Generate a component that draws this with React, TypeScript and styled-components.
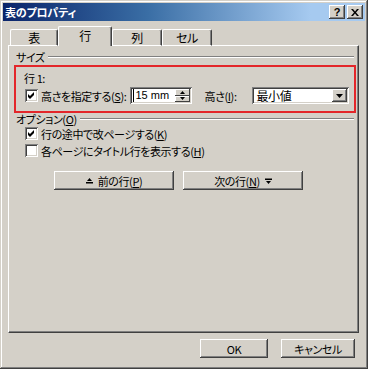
import React from 'react';
import styled, { createGlobalStyle } from 'styled-components';

const GlobalStyle = createGlobalStyle`
    html, body {
        margin: 0;
        padding: 0;
        background: #d4d0c8;
    }
    body {
        font-family: 'Noto Sans CJK JP', 'Noto Sans', sans-serif;
        font-size: 11px;
        letter-spacing: -0.4px;
        font-feature-settings: 'palt';
        color: #000;
    }
`;

const raised = `
    box-shadow: inset -1px -1px #404040, inset 1px 1px #ffffff, inset -2px -2px #808080, inset 2px 2px #d4d0c8;
`;

const sunken = `
    box-shadow: inset 1px 1px #808080, inset -1px -1px #ffffff, inset 2px 2px #404040, inset -2px -2px #d4d0c8;
`;

const Window = styled.div`
    width: 368px;
    height: 369px;
    box-sizing: border-box;
    padding: 3px;
    background: #d4d0c8;
    box-shadow: inset -1px -1px #404040, inset 1px 1px #d4d0c8, inset -2px -2px #808080, inset 2px 2px #ffffff;
    display: flex;
    flex-direction: column;
`;

const TitleBar = styled.div`
    height: 18px;
    display: flex;
    align-items: center;
    justify-content: space-between;
    padding: 0 2px 0 2px;
    background: linear-gradient(90deg, #0a246a 0%, #3a6ea5 40%, #a6caf0 85%);
`;

const Title = styled.span`
    color: #fff;
    font-weight: bold;
    font-size: 11px;
    line-height: 18px;
    letter-spacing: -0.2px;
`;

const CaptionButtons = styled.div`
    display: flex;
    gap: 2px;
`;

const CaptionButton = styled.div`
    width: 16px;
    height: 14px;
    background: #d4d0c8;
    ${raised}
    display: flex;
    align-items: center;
    justify-content: center;
    font-family: 'Liberation Sans', sans-serif;
    font-weight: bold;
    font-size: 11px;
    line-height: 14px;
    letter-spacing: 0;
`;

const Body = styled.div`
    flex: 1;
    display: flex;
    flex-direction: column;
    padding: 6px 6px 0 5px;
`;

const TabStrip = styled.div`
    display: flex;
    align-items: flex-end;
    height: 19px;
    padding-left: 2px;
    position: relative;
    z-index: 1;
    margin-bottom: -1px;
`;

const Tab = styled.div<{ $active?: boolean; $w: number }>`
    width: ${({ $w }) => $w}px;
    height: ${({ $active }) => ($active ? 20 : 17)}px;
    box-sizing: border-box;
    background: #d4d0c8;
    border-top: 1px solid #fff;
    border-left: 1px solid #fff;
    border-right: 1px solid #404040;
    border-radius: 2px 2px 0 0;
    box-shadow: inset -1px 0 #808080;
    display: flex;
    align-items: center;
    justify-content: center;
    padding-bottom: ${({ $active }) => ($active ? 2 : 0)}px;
    font-size: 12px;
    border-bottom: ${({ $active }) => ($active ? 'none' : '1px solid #fff')};
`;

const Panel = styled.div`
    height: 288px;
    box-sizing: border-box;
    border-top: 1px solid #fff;
    border-left: 1px solid #fff;
    border-right: 1px solid #404040;
    border-bottom: 1px solid #404040;
    box-shadow: inset -1px -1px #808080;
    display: flex;
    flex-direction: column;
`;

const GroupHeader = styled.div<{ $top: number }>`
    display: flex;
    align-items: center;
    height: 12px;
    margin-top: ${({ $top }) => $top}px;
    padding-left: 7px;
    padding-right: 4px;
    gap: 3px;
    line-height: 12px;

    &::after {
        content: '';
        flex: 1;
        height: 0;
        border-top: 1px solid #808080;
        border-bottom: 1px solid #fff;
    }
`;

const Highlight = styled.div`
    margin: 2px 2px 0 5px;
    height: 48px;
    box-sizing: border-box;
    border: 2px solid #e3262a;
    padding: 4px 0 0 8px;
    display: flex;
    flex-direction: column;
`;

const RowTitle = styled.div`
    height: 14px;
    line-height: 14px;
`;

const FieldRow = styled.div`
    display: flex;
    align-items: center;
    height: 17px;
    margin-top: 2px;
`;

const Box = styled.div`
    width: 13px;
    height: 13px;
    box-sizing: border-box;
    background: #fff;
    ${sunken}
    display: flex;
    align-items: center;
    justify-content: center;
    flex: none;
`;

const Label = styled.span<{ $w?: number; $ml?: number }>`
    margin-left: ${({ $ml }) => $ml ?? 3}px;
    width: ${({ $w }) => ($w ? `${$w}px` : 'auto')};
    white-space: nowrap;
    line-height: 14px;
`;

const SpinBox = styled.div`
    margin-left: 4px;
    width: 62px;
    height: 17px;
    box-sizing: border-box;
    background: #fff;
    ${sunken}
    display: flex;
    align-items: center;
    padding: 2px 2px 2px 3px;
`;

const SpinText = styled.span`
    flex: 1;
    font-family: 'Liberation Sans', sans-serif;
    font-size: 11px;
    letter-spacing: 0;
    line-height: 13px;
    border-left: 1px solid #000;
    padding-left: 1px;
`;

const SpinButtons = styled.div`
    display: flex;
    flex-direction: column;
    width: 15px;
    height: 13px;
`;

const SpinButton = styled.div`
    flex: 1;
    background: #d4d0c8;
    box-shadow: inset -1px -1px #404040, inset 1px 1px #ffffff;
    display: flex;
    align-items: center;
    justify-content: center;
`;

const Select = styled.div`
    width: 97px;
    height: 17px;
    box-sizing: border-box;
    background: #fff;
    ${sunken}
    display: flex;
    align-items: center;
    padding: 2px;
`;

const SelectText = styled.span`
    flex: 1;
    padding-left: 2px;
    font-size: 12px;
    line-height: 13px;
`;

const DropButton = styled.div`
    width: 15px;
    height: 13px;
    background: #d4d0c8;
    ${raised}
    display: flex;
    align-items: center;
    justify-content: center;
`;

const CheckRow = styled.div<{ $top: number }>`
    display: flex;
    align-items: center;
    height: 13px;
    margin-top: ${({ $top }) => $top}px;
    padding-left: 16px;
`;

const NavRow = styled.div`
    display: flex;
    gap: 9px;
    margin-top: 14px;
    padding-left: 45px;
`;

const Button = styled.div<{ $w: number }>`
    width: ${({ $w }) => $w}px;
    height: 19px;
    box-sizing: border-box;
    background: #d4d0c8;
    ${raised}
    display: flex;
    align-items: center;
    justify-content: center;
    gap: 5px;
    line-height: 14px;
`;

const Footer = styled.div`
    display: flex;
    justify-content: flex-end;
    gap: 13px;
    margin-top: 6px;
    padding-right: 4px;
`;

const Check = () => (
    <svg width="7" height="7" viewBox="0 0 7 7">
        <path d="M0 2 L2 4 L6 0 L6 3 L2 7 L0 5 Z" fill="#000" />
    </svg>
);

const Tri = ({ up, w = 5 }: { up?: boolean; w?: number }) => (
    <svg width={w} height={Math.ceil(w / 2)} viewBox={`0 0 ${w} ${Math.ceil(w / 2)}`}>
        {up ? (
            <path d={`M0 ${Math.ceil(w / 2)} L${w / 2} 0 L${w} ${Math.ceil(w / 2)} Z`} fill="#000" />
        ) : (
            <path d={`M0 0 L${w} 0 L${w / 2} ${Math.ceil(w / 2)} Z`} fill="#000" />
        )}
    </svg>
);

const PrevIcon = () => (
    <svg width="7" height="6" viewBox="0 0 7 6">
        <path d="M1 3 L3.5 0 L6 3 Z" fill="#000" />
        <rect x="0" y="4" width="7" height="1.5" fill="#000" />
    </svg>
);

const NextIcon = () => (
    <svg width="7" height="6" viewBox="0 0 7 6">
        <rect x="0" y="0.5" width="7" height="1.5" fill="#000" />
        <path d="M1 3 L6 3 L3.5 6 Z" fill="#000" />
    </svg>
);

const CloseIcon = () => (
    <svg width="8" height="7" viewBox="0 0 8 7">
        <path d="M0 0 L2 0 L4 2.5 L6 0 L8 0 L5 3.5 L8 7 L6 7 L4 4.5 L2 7 L0 7 L3 3.5 Z" fill="#000" />
    </svg>
);

export default function App() {
    return (
        <>
            <GlobalStyle />
            <Window>
                <TitleBar>
                    <Title>表のプロパティ</Title>
                    <CaptionButtons>
                        <CaptionButton>?</CaptionButton>
                        <CaptionButton>
                            <CloseIcon />
                        </CaptionButton>
                    </CaptionButtons>
                </TitleBar>
                <Body>
                    <TabStrip>
                        <Tab $w={48}>表</Tab>
                        <Tab $w={54} $active>
                            行
                        </Tab>
                        <Tab $w={50}>列</Tab>
                        <Tab $w={50}>セル</Tab>
                    </TabStrip>
                    <Panel>
                        <GroupHeader $top={5}>サイズ</GroupHeader>
                        <Highlight>
                            <RowTitle>行 1:</RowTitle>
                            <FieldRow>
                                <Box style={{ marginLeft: 1 }}>
                                    <Check />
                                </Box>
                                <Label>
                                    高さを指定する(<u>S</u>):
                                </Label>
                                <SpinBox>
                                    <SpinText>15 mm</SpinText>
                                    <SpinButtons>
                                        <SpinButton>
                                            <Tri up />
                                        </SpinButton>
                                        <SpinButton>
                                            <Tri />
                                        </SpinButton>
                                    </SpinButtons>
                                </SpinBox>
                                <Label $ml={12} $w={48}>
                                    高さ(<u>I</u>):
                                </Label>
                                <Select>
                                    <SelectText>最小値</SelectText>
                                    <DropButton>
                                        <Tri w={7} />
                                    </DropButton>
                                </Select>
                            </FieldRow>
                        </Highlight>
                        <GroupHeader $top={0}>
                            <span>
                                オプション(<u>O</u>)
                            </span>
                        </GroupHeader>
                        <CheckRow $top={2}>
                            <Box>
                                <Check />
                            </Box>
                            <Label>
                                行の途中で改ページする(<u>K</u>)
                            </Label>
                        </CheckRow>
                        <CheckRow $top={4}>
                            <Box />
                            <Label>
                                各ページにタイトル行を表示する(<u>H</u>)
                            </Label>
                        </CheckRow>
                        <NavRow>
                            <Button $w={120}>
                                <PrevIcon />
                                <span>
                                    前の行(<u>P</u>)
                                </span>
                            </Button>
                            <Button $w={120}>
                                <span>
                                    次の行(<u>N</u>)
                                </span>
                                <NextIcon />
                            </Button>
                        </NavRow>
                    </Panel>
                    <Footer>
                        <Button $w={68}>OK</Button>
                        <Button $w={74}>キャンセル</Button>
                    </Footer>
                </Body>
            </Window>
        </>
    );
}
